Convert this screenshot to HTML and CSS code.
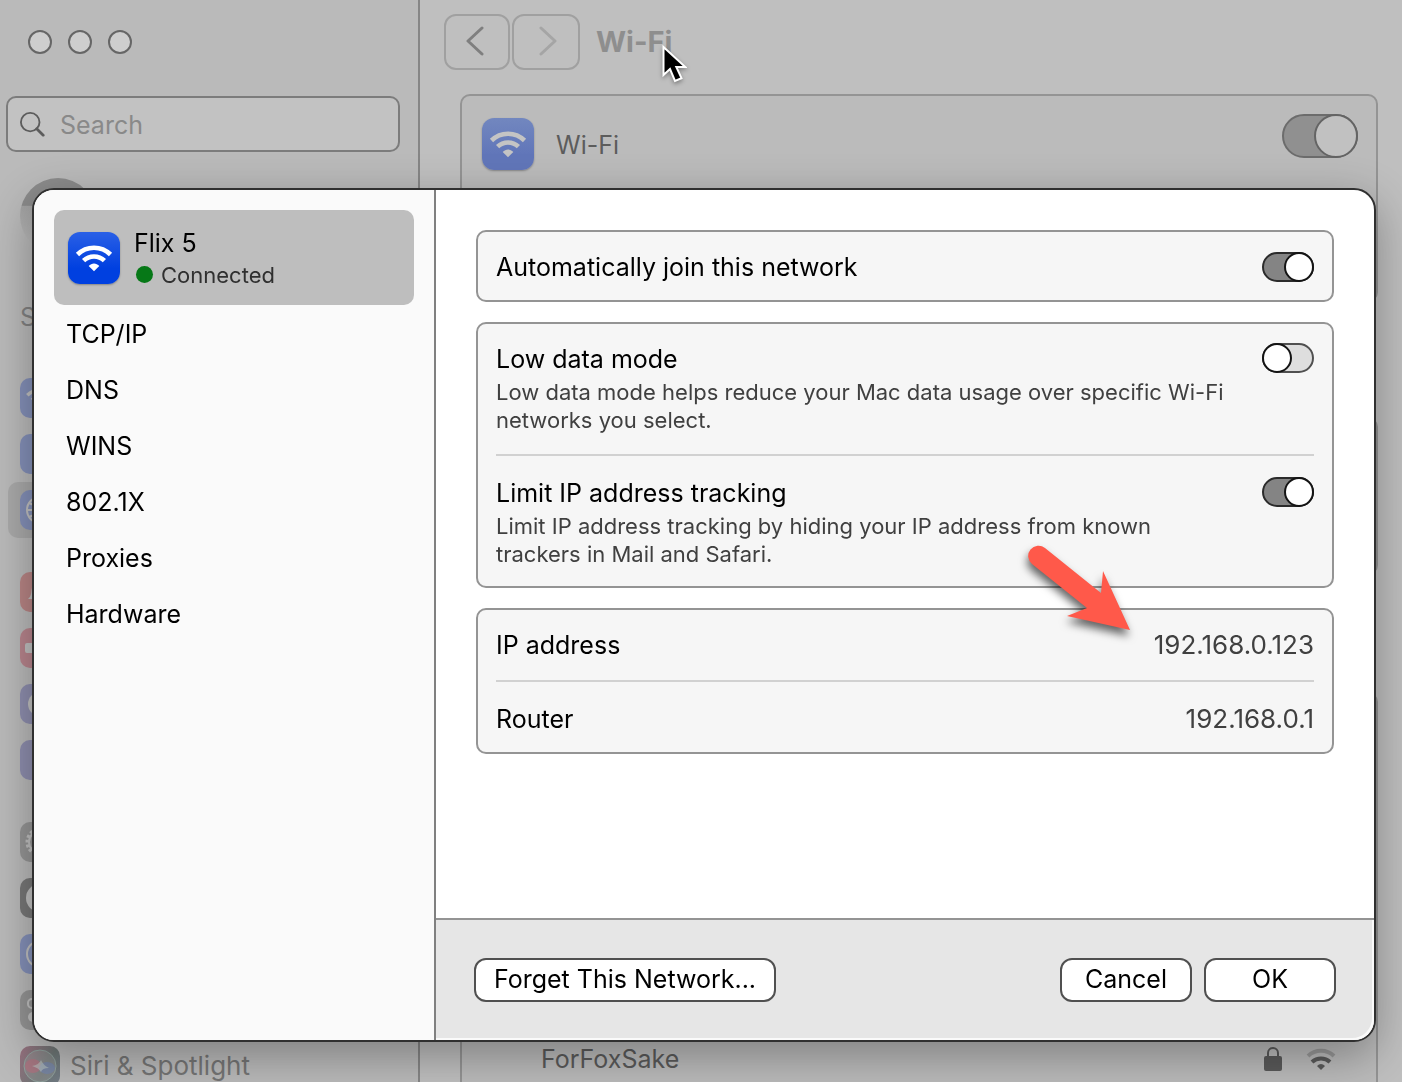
FILE: index.html
```html
<!DOCTYPE html>
<html lang="en">
<head>
<meta charset="utf-8">
<meta name="viewport" content="width=device-width, initial-scale=1">
<title>Wi-Fi</title>
<link rel="stylesheet" href="styles.css">
</head>
<body>
<svg class="symbols" aria-hidden="true">
  <symbol id="wifi" viewBox="0 0 52 52">
    <g fill="none" stroke="currentColor" stroke-width="4.600">
      <path d="M9.500 22.500a23.500 23.500 0 0 1 33 0" stroke-linecap="butt"/>
      <path d="M15.600 28.700a14.800 14.800 0 0 1 20.800 0"/>
    </g>
    <path fill="currentColor" d="M26 39.300l-5.300-5.300c3-3.400 7.600-3.400 10.600 0z"/>
  </symbol>
</svg>

<div class="window">
  <aside class="sidebar">
    <div class="lights">
      <button class="light" type="button" aria-label="Close"></button>
      <button class="light" type="button" aria-label="Minimize"></button>
      <button class="light" type="button" aria-label="Zoom"></button>
    </div>
    <div class="search">
      <svg class="search-icon" viewBox="0 0 28 28" aria-hidden="true"><g fill="none" stroke="currentColor" stroke-width="2"><circle cx="11" cy="12" r="10"/><path d="M18 19l7 7" stroke-width="3" stroke-linecap="round"/></g></svg>
      <input class="search-input" type="search" placeholder="Search" aria-label="Search">
    </div>
    <div class="avatar"></div>
    <div class="notice">S</div>
    <nav class="menu">
      <div class="group">
        <div class="item"><span class="tile blue"><svg class="glyph" viewBox="0 0 52 52"><use href="#wifi"/></svg></span></div>
        <div class="item"><span class="tile blue"></span></div>
        <div class="item selected"><span class="tile blue"><svg class="glyph" viewBox="0 0 40 40"><g fill="none" stroke="currentColor" stroke-width="2"><circle cx="20" cy="20" r="13"/><ellipse cx="20" cy="20" rx="6" ry="13"/><path d="M7 20h26M9 13q11 6 22 0M9 27q11-6 22 0"/></g></svg></span></div>
      </div>
      <div class="group">
        <div class="item"><span class="tile red"><svg class="glyph" viewBox="0 0 40 40"><path fill="currentColor" d="M8 27c4-3 3-8 4-11 1-5 4-7 8-7s7 2 8 7c1 3 0 8 4 11z"/></svg></span></div>
        <div class="item"><span class="tile pink"><svg class="glyph" viewBox="0 0 40 40"><path fill="currentColor" d="M7 15h7l8-7v24l-8-7H7q-2 0-2-2v-6q0-2 2-2z"/></svg></span></div>
        <div class="item"><span class="tile indigo"><svg class="glyph" viewBox="0 0 40 40"><circle cx="20" cy="20" r="12" fill="currentColor"/></svg></span></div>
        <div class="item"><span class="tile indigo"></span></div>
      </div>
      <div class="group">
        <div class="item"><span class="tile gray"><svg class="glyph" viewBox="0 0 40 40"><g fill="none" stroke="currentColor"><circle cx="20" cy="20" r="13" stroke-width="3" stroke-dasharray="3 2"/><circle cx="20" cy="20" r="11" stroke-width="2"/></g></svg></span></div>
        <div class="item"><span class="tile black"><svg class="glyph" viewBox="0 0 40 40"><circle cx="20" cy="20" r="14" fill="currentColor"/></svg></span></div>
        <div class="item"><span class="tile blue"><svg class="glyph" viewBox="0 0 40 40"><circle cx="20" cy="20" r="13" fill="none" stroke="currentColor" stroke-width="2"/></svg></span></div>
        <div class="item"><span class="tile gray"><svg class="glyph" viewBox="0 0 40 40"><rect x="8" y="9" width="24" height="9" rx="4" fill="none" stroke="currentColor" stroke-width="2"/><rect x="8" y="22" width="24" height="10" rx="5" fill="currentColor"/></svg></span></div>
        <div class="item"><span class="tile siri"><svg class="glyph" viewBox="0 0 40 40"><circle cx="20" cy="20" r="16" fill="#9b9b9b" fill-opacity=".4" stroke="#8fa09c" stroke-width="1"/><ellipse cx="13" cy="20" rx="8" ry="7" fill="#b0707f" opacity=".7"/><ellipse cx="27" cy="22" rx="8" ry="6" fill="#7485ad" opacity=".7"/><path d="M12 20q7-1 9-6 2 5 8 8-7 0-8 4-2-4-9-6z" fill="#b5c0bd" opacity=".6"/></svg></span><span>Siri &amp; Spotlight</span></div>
      </div>
    </nav>
  </aside>

  <main class="pane">
    <header class="toolbar">
      <button class="nav-button" type="button" aria-label="Back"><svg class="chevron" viewBox="0 0 18 30"><path d="M16 2L2 15l14 13"/></svg></button>
      <button class="nav-button forward" type="button" aria-label="Forward"><svg class="chevron" viewBox="0 0 18 30"><path d="M2 2l14 13L2 28"/></svg></button>
      <h1 class="title">Wi-Fi
        <svg class="pointer" viewBox="0 0 26 42" aria-hidden="true"><path d="M2.500 3v28l6.500-6 5 12 6.500-2.800-5.200-11.200h9z" fill="#000" stroke="#fff" stroke-width="2"/></svg>
      </h1>
    </header>
    <section class="panel status">
      <span class="app-icon dimmed"><svg class="app-glyph" viewBox="0 0 52 52"><use href="#wifi"/></svg></span>
      <label class="status-label" for="wifi-power">Wi-Fi</label>
      <input class="switch large" id="wifi-power" type="checkbox" role="switch" checked>
    </section>
    <section class="panel known"></section>
    <section class="panel others">
      <div class="network">
        <span class="network-name">ForFoxSake</span>
        <svg class="lock" viewBox="0 0 18 26" aria-hidden="true"><path d="M4 12V7a5 5 0 0 1 10 0v5" fill="none" stroke="currentColor" stroke-width="2"/><rect y="10" width="18" height="15" rx="2" fill="currentColor"/></svg>
        <svg class="signal" viewBox="0 0 30 24" aria-hidden="true"><g fill="none" stroke="currentColor" stroke-width="4"><path d="M2 9a19 19 0 0 1 26 0" opacity=".35"/><path d="M6 15a13 13 0 0 1 18 0"/></g><path d="M15 23l-4-4q4-4 8 0z" fill="currentColor"/></svg>
      </div>
    </section>
  </main>
</div>

<div class="overlay">
  <div class="dialog" role="dialog" aria-modal="true" aria-label="Flix 5">
    <nav class="tabs">
      <a class="tab-current" href="#network">
        <span class="app-icon"><svg class="app-glyph" viewBox="0 0 52 52"><use href="#wifi"/></svg></span>
        <span class="current-text">
          <span class="current-name">Flix 5</span>
          <span class="current-state"><span class="dot"></span>Connected</span>
        </span>
      </a>
      <a class="tab" href="#tcpip">TCP/IP</a>
      <a class="tab" href="#dns">DNS</a>
      <a class="tab" href="#wins">WINS</a>
      <a class="tab" href="#8021x">802.1X</a>
      <a class="tab" href="#proxies">Proxies</a>
      <a class="tab" href="#hardware">Hardware</a>
    </nav>
    <div class="detail">
      <div class="cards">
        <section class="card">
          <div class="row">
            <label class="label" for="auto-join">Automatically join this network</label>
            <input class="switch" id="auto-join" type="checkbox" role="switch" checked>
          </div>
        </section>
        <section class="card">
          <div class="row described">
            <div class="text">
              <label class="label" for="low-data">Low data mode</label>
              <p class="hint">Low data mode helps reduce your Mac data usage over specific Wi-Fi networks you select.</p>
            </div>
            <input class="switch" id="low-data" type="checkbox" role="switch">
          </div>
          <div class="row described">
            <div class="text">
              <label class="label" for="limit-ip">Limit IP address tracking</label>
              <p class="hint">Limit IP address tracking by hiding your IP address from known trackers in Mail and Safari.</p>
            </div>
            <input class="switch" id="limit-ip" type="checkbox" role="switch" checked>
          </div>
        </section>
        <section class="card addresses">
          <div class="row"><span class="label">IP address</span><span class="value">192.168.0.123</span></div>
          <div class="row"><span class="label">Router</span><span class="value">192.168.0.1</span></div>
          <svg class="arrow" viewBox="0 0 110 100" aria-hidden="true"><path fill="#ff594a" d="M25 8L81 53L83 31L110 90L47 76L67 68L12 24A10 10 0 0 1 25 8Z"/></svg>
        </section>
      </div>
      <footer class="actions">
        <button class="button forget" type="button">Forget This Network...</button>
        <button class="button" type="button">Cancel</button>
        <button class="button" type="button">OK</button>
      </footer>
    </div>
  </div>
</div>
</body>
</html>
```
FILE: styles.css
```css
* {
  box-sizing: border-box;
}

body {
  margin: 0;
  font-family: Inter, "Liberation Sans", sans-serif;
  font-size: 25px;
  font-weight: 430;
  line-height: 32px;
  color: #000;
  background: #bfbfbf;
}

button,
input {
  font: inherit;
  margin: 0;
}

svg {
  display: block;
}

.symbols {
  position: absolute;
  width: 0;
  height: 0;
}

/* Settings window behind the dialog */
.window {
  display: flex;
  height: 100vh;
  overflow: hidden;
}

.sidebar {
  flex: 0 0 420px;
  min-width: 0;
  background: #bababa;
  border-right: 2px solid #868686;
}

.lights {
  display: flex;
  gap: 16px;
  padding: 30px 28px 42px;
}

.light {
  width: 24px;
  height: 24px;
  padding: 0;
  border: 2px solid #666;
  border-radius: 50%;
  background: #cecece;
}

.search {
  display: flex;
  align-items: center;
  gap: 14px;
  height: 56px;
  margin: 0 18px 26px 6px;
  padding: 0 12px;
  border: 2px solid #7c7c7c;
  border-radius: 10px;
  background: #c2c2c2;
}

.search-icon {
  flex-shrink: 0;
  width: 26px;
  height: 26px;
  color: #5c5c5c;
}

.search-input {
  flex: 1;
  min-width: 0;
  padding: 2px 0 0;
  border: 0;
  outline: 0;
  background: none;
}

.search-input::placeholder {
  color: #898989;
}

.avatar {
  width: 76px;
  height: 76px;
  margin-left: 20px;
  border-radius: 50%;
  background: linear-gradient(#8b8b8b 36%, #a3a3a3 37%, #b8b8b8 80%);
}

.notice {
  padding: 47px 20px 0;
  margin-bottom: 37px;
  color: #828282;
}

.group {
  margin-bottom: 26px;
}

.item {
  display: flex;
  align-items: center;
  gap: 10px;
  height: 56px;
  margin: 0 8px;
  padding: 0 12px;
  font-size: 26px;
  font-weight: 400;
  color: #757575;
}

.item.selected {
  border-radius: 10px;
  background: #a9a9a9;
}

.tile {
  width: 40px;
  height: 40px;
  border-radius: 10px;
  color: #c0c0c0;
}

.glyph {
  width: 40px;
  height: 40px;
}

.blue {
  background: #8490b8;
}

.red {
  background: #b88585;
}

.pink {
  background: #b8858d;
}

.indigo {
  background: #8e8eae;
}

.gray {
  background: #959595;
}

.black {
  background: #777;
}

.siri {
  background: linear-gradient(120deg, #9a7180, #6d7675 60%, #737c87);
}

.pane {
  flex: 1;
  display: flex;
  flex-direction: column;
  min-width: 0;
  padding: 14px 24px 0;
}

.toolbar {
  display: flex;
  align-items: center;
  gap: 2px;
  height: 56px;
  margin-bottom: 24px;
}

.nav-button {
  display: grid;
  place-items: center;
  width: 66px;
  height: 56px;
  padding: 0 4px 2px 0;
  border: 2px solid #a0a0a0;
  border-radius: 12px;
  background: none;
  color: #7f7f7f;
}

.nav-button.forward {
  width: 68px;
  padding: 0 0 2px 4px;
  color: #a5a5a5;
}

.chevron {
  width: 18px;
  height: 30px;
  fill: none;
  stroke: currentColor;
  stroke-width: 3;
  stroke-linecap: round;
  stroke-linejoin: round;
}

.title {
  position: relative;
  margin: 0 0 0 14px;
  font-size: 29px;
  font-weight: 700;
  color: #8e8e8e;
}

.pointer {
  position: absolute;
  left: 65px;
  top: 18px;
  width: 26px;
  height: 42px;
  filter: drop-shadow(0 2px 2px rgba(0, 0, 0, .35));
}

.panel {
  flex-shrink: 0;
  margin-left: 16px;
  border: 2px solid #949494;
  border-radius: 10px;
  background: #bbb;
}

.status {
  display: flex;
  align-items: flex-start;
  height: 208px;
  padding: 22px 18px 0 20px;
}

.status-label {
  flex: 1;
  padding: 11px 22px;
  color: #5c5c5c;
}

.known {
  height: 158px;
  margin-top: 115px;
}

.others {
  margin-top: 117px;
  padding-top: 328px;
}

.network {
  display: flex;
  align-items: center;
  height: 74px;
  padding: 0 40px 0 79px;
  color: #5a5a5a;
}

.network-name {
  flex: 1;
}

.lock {
  width: 18px;
  height: 26px;
  margin-right: 24px;
}

.signal {
  width: 30px;
  height: 24px;
}

.app-icon {
  flex-shrink: 0;
  width: 52px;
  height: 52px;
  border-radius: 12px;
  color: #fff;
  background: linear-gradient(#2a60e6, #0040e0 70%);
  box-shadow: 0 1px 2px rgba(0, 0, 0, .3);
}

.app-icon.dimmed {
  color: #c4c4c4;
  background: linear-gradient(#7287bf, #6176b9 70%);
}

.app-glyph {
  width: 52px;
  height: 52px;
}

/* Switches */
.switch {
  appearance: none;
  flex-shrink: 0;
  width: 52px;
  height: 30px;
  border: 2px solid #505050;
  border-radius: 15px;
  background: #dedede;
}

.switch::before {
  content: "";
  display: block;
  box-sizing: border-box;
  width: 30px;
  height: 30px;
  margin: -2px;
  border: 2px solid #141414;
  border-radius: 50%;
  background: #fff;
}

.switch:checked {
  border-color: #2b2b2b;
  background: #848484;
}

.switch:checked::before {
  margin-left: 20px;
}

.switch.large {
  width: 76px;
  height: 44px;
  margin-top: -4px;
  border-color: #6c6c6c;
  border-radius: 22px;
  background: #909090;
}

.switch.large::before {
  width: 44px;
  height: 44px;
  margin-left: 30px;
  border-color: #646464;
  background: #c1c1c1;
}

/* Network dialog */
.overlay {
  position: fixed;
  inset: 0;
  display: flex;
  padding: 188px 26px 40px 32px;
}

.dialog {
  flex: 1;
  display: flex;
  overflow: hidden;
  border: 2px solid #303030;
  border-radius: 22px;
  background: #fff;
  box-shadow: 0 14px 46px rgba(0, 0, 0, .32);
}

.tabs {
  flex: 0 0 402px;
  padding: 20px;
  border-right: 2px solid #808080;
  background: #fafafa;
}

.tab-current {
  display: flex;
  align-items: center;
  gap: 14px;
  height: 95px;
  padding: 0 14px;
  border-radius: 10px;
  background: #bebebe;
  color: #000;
  text-decoration: none;
}

.current-text {
  display: flex;
  flex-direction: column;
  padding-top: 2px;
}

.current-state {
  display: flex;
  align-items: center;
  gap: 8px;
  padding-left: 2px;
  font-size: 22px;
  font-weight: 400;
  color: #303030;
}

.dot {
  width: 17px;
  height: 17px;
  border-radius: 50%;
  background: #067817;
}

.tab {
  display: block;
  padding: 13px 12px 11px;
  color: #000;
  text-decoration: none;
}

.detail {
  flex: 1;
  display: flex;
  flex-direction: column;
  min-width: 0;
}

.cards {
  flex: 1;
  display: flex;
  flex-direction: column;
  gap: 20px;
  padding: 40px;
}

.card {
  padding: 0 18px;
  border: 2px solid #949494;
  border-radius: 10px;
  background: #f6f6f6;
}

.row {
  display: flex;
  align-items: center;
  justify-content: space-between;
  min-height: 68px;
  padding-top: 2px;
}

.addresses .row {
  min-height: 70px;
  padding-top: 0;
}

.addresses .row + .row {
  min-height: 72px;
  padding-top: 4px;
}

.row + .row {
  border-top: 2px solid #d1d1d1;
}

.row.described {
  align-items: flex-start;
  padding: 19px 0 20px;
}

.row.described + .described {
  padding: 21px 0 18px;
}

.text {
  flex: 0 1 738px;
}

.label {
  display: block;
}

.hint {
  margin: 3px 0 0;
  font-size: 22px;
  font-weight: 400;
  line-height: 28px;
  color: #404040;
}

.value {
  font-size: 26px;
  color: #404040;
}

.addresses {
  position: relative;
}

.arrow {
  position: absolute;
  right: 202px;
  top: -70px;
  width: 110px;
  height: 100px;
  overflow: visible;
  filter: drop-shadow(-1px 6px 4px rgba(0, 0, 0, .6));
}

.actions {
  display: flex;
  align-items: center;
  gap: 12px;
  height: 122px;
  padding: 0 38px;
  border-top: 2px solid #949494;
  background: #e6e6e6;
  box-shadow: inset -2px -2px #fafafa;
  border-bottom-right-radius: 20px;
}

.button {
  width: 132px;
  height: 44px;
  padding: 0 0 2px;
  border: 2px solid #505050;
  border-radius: 12px;
  background: #fff;
  color: #000;
}

.forget {
  width: 302px;
  margin-right: auto;
}
```
